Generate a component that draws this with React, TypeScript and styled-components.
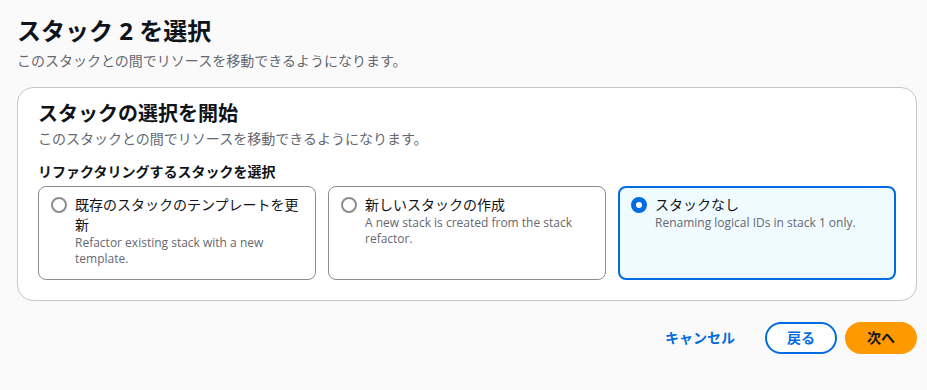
import React, { useState } from "react";
import styled, { createGlobalStyle, css } from "styled-components";

const GlobalStyle = createGlobalStyle`
  html, body {
    margin: 0;
    padding: 0;
    background: #fafafa;
  }
  body {
    font-family: "Open Sans", "Noto Sans CJK JP", sans-serif;
    color: #0f141a;
  }
`;

const Page = styled.div`
  padding: 15px 10px 0 17px;
  display: flex;
  flex-direction: column;
`;

const PageTitle = styled.h1`
  margin: 0;
  font-size: 24px;
  line-height: 32px;
  font-weight: 700;
  color: #0f141a;
`;

const Description = styled.p<{ $mt?: number }>`
  margin: ${({ $mt }) => $mt ?? 4}px 0 0;
  font-size: 14px;
  line-height: 20px;
  color: #656871;
`;

const Container = styled.section`
  margin-top: 16px;
  background: #ffffff;
  border: 1px solid #c6c6cd;
  border-radius: 16px;
  padding: 12px 20px 20px;
  display: flex;
  flex-direction: column;
`;

const ContainerTitle = styled.h2`
  margin: 0;
  font-size: 20px;
  line-height: 28px;
  font-weight: 700;
`;

const Label = styled.div`
  margin-top: 13px;
  font-size: 14px;
  line-height: 20px;
  font-weight: 700;
`;

const Tiles = styled.div`
  margin-top: 4px;
  display: grid;
  grid-template-columns: repeat(3, 1fr);
  gap: 12px;
`;

const Tile = styled.label<{ $selected?: boolean }>`
  display: flex;
  gap: 8px;
  align-items: flex-start;
  border-radius: 8px;
  cursor: pointer;
  ${({ $selected }) =>
    $selected
      ? css`
          border: 2px solid #006ce0;
          background: #f0fbff;
          padding: 7px 11px 11px;
        `
      : css`
          border: 1px solid #8c8c94;
          background: #ffffff;
          padding: 8px 12px 12px;
        `}
`;

const Radio = styled.span<{ $checked?: boolean }>`
  flex: none;
  box-sizing: border-box;
  width: 16px;
  height: 16px;
  margin-top: 2px;
  border-radius: 50%;
  background: #ffffff;
  border: ${({ $checked }) =>
    $checked ? "5px solid #006ce0" : "2px solid #8c8c94"};
`;

const TileText = styled.div`
  display: flex;
  flex-direction: column;
`;

const TileTitle = styled.span`
  font-size: 14px;
  line-height: 20px;
  color: #0f141a;
`;

const TileDesc = styled.span`
  font-size: 12px;
  line-height: 16px;
  color: #656871;
`;

const Actions = styled.div`
  margin-top: 21px;
  display: flex;
  justify-content: flex-end;
  align-items: center;
  gap: 8px;
`;

const Button = styled.button<{ $variant: "link" | "normal" | "primary" }>`
  height: 32px;
  box-sizing: border-box;
  border-radius: 20px;
  font-family: inherit;
  font-size: 14px;
  font-weight: 700;
  line-height: 20px;
  cursor: pointer;
  padding: 0 20px;
  ${({ $variant }) =>
    $variant === "link"
      ? css`
          border: 2px solid transparent;
          background: transparent;
          color: #006ce0;
        `
      : $variant === "normal"
      ? css`
          border: 2px solid #006ce0;
          background: #ffffff;
          color: #006ce0;
        `
      : css`
          border: 2px solid #ff9900;
          background: #ff9900;
          color: #0f141a;
        `}
`;

const options = [
  {
    id: "update",
    title: "既存のスタックのテンプレートを更新",
    desc: "Refactor existing stack with a new template.",
  },
  {
    id: "create",
    title: "新しいスタックの作成",
    desc: "A new stack is created from the stack refactor.",
  },
  {
    id: "none",
    title: "スタックなし",
    desc: "Renaming logical IDs in stack 1 only.",
  },
];

export default function App() {
  const [selected, setSelected] = useState("none");

  return (
    <>
      <GlobalStyle />
      <Page>
        <PageTitle>スタック 2 を選択</PageTitle>
        <Description>このスタックとの間でリソースを移動できるようになります。</Description>
        <Container>
          <ContainerTitle>スタックの選択を開始</ContainerTitle>
          <Description $mt={1}>
            このスタックとの間でリソースを移動できるようになります。
          </Description>
          <Label>リファクタリングするスタックを選択</Label>
          <Tiles>
            {options.map((o) => (
              <Tile
                key={o.id}
                $selected={selected === o.id}
                onClick={() => setSelected(o.id)}
              >
                <Radio $checked={selected === o.id} />
                <TileText>
                  <TileTitle>{o.title}</TileTitle>
                  <TileDesc>{o.desc}</TileDesc>
                </TileText>
              </Tile>
            ))}
          </Tiles>
        </Container>
        <Actions>
          <Button $variant="link">キャンセル</Button>
          <Button $variant="normal">戻る</Button>
          <Button $variant="primary">次へ</Button>
        </Actions>
      </Page>
    </>
  );
}
